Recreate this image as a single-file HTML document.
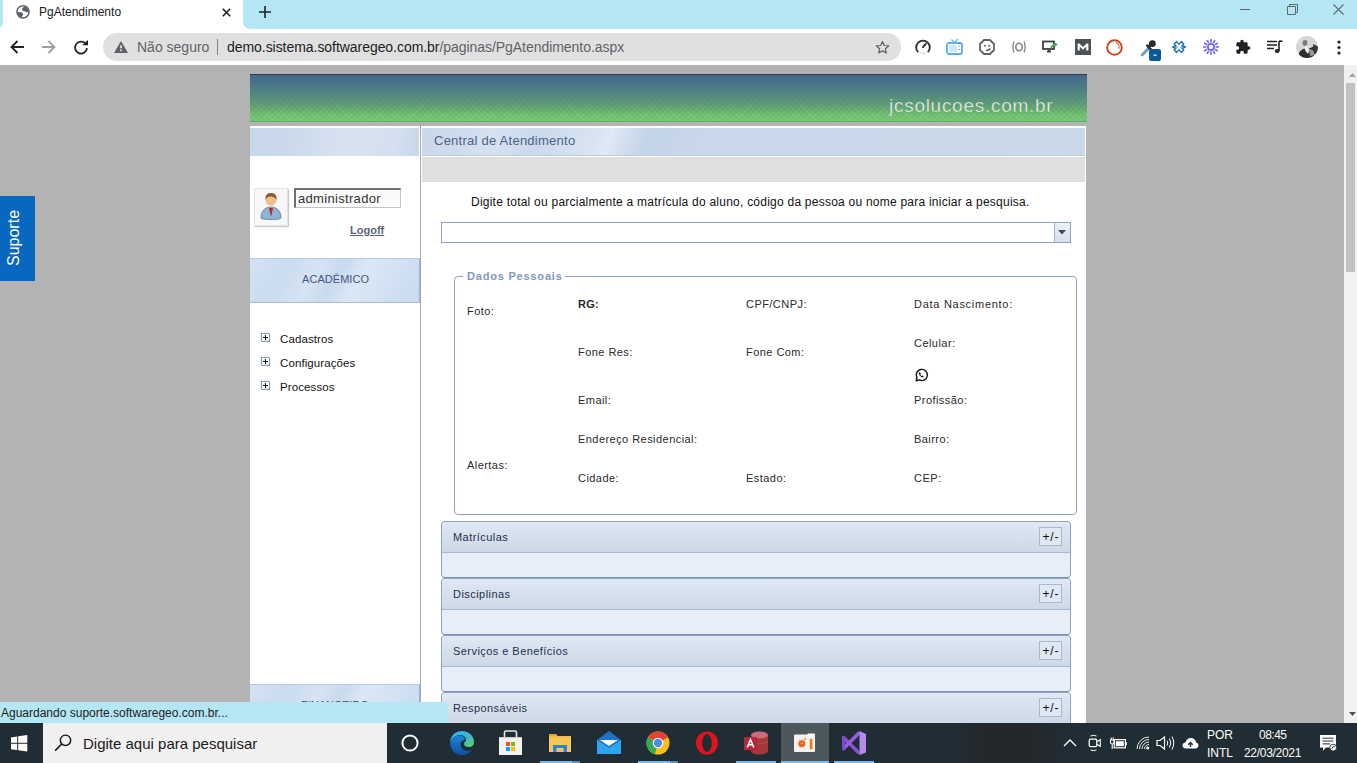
<!DOCTYPE html>
<html><head><meta charset="utf-8">
<style>
*{margin:0;padding:0;box-sizing:border-box}
html,body{width:1357px;height:763px;overflow:hidden;background:#b3b3b3;font-family:"Liberation Sans",sans-serif}
.a{position:absolute}
.t{position:absolute;white-space:nowrap;line-height:1}
svg{position:absolute;overflow:visible}
.lbl{position:absolute;white-space:nowrap;line-height:1;font-size:11px;letter-spacing:0.45px;color:#2a2a2a}
.hdrtex{background:linear-gradient(100deg,#c8d8eb 0%,#cbd9ec 25%,#d4e0ef 45%,#d8e3f0 60%,#d4e0ef 85%,#c6d6ec 100%)}
.hdrmain{background:linear-gradient(110deg,#c9d8ea 0px,#cfdcec 40px,#d6e2f0 70px,#cad9eb 110px,#d9e4f1 165px,#e0e9f4 180px,#c3d3e8 215px,#c8d7ea 260px,#cbd9ea 663px)}
.hdracad{background:linear-gradient(120deg,#d3e2f3 0%,#cbdcf0 22%,#d6e4f4 38%,#c9daef 50%,#dbe7f5 62%,#d2e1f3 80%,#c8daf0 100%)}
.pnl{position:absolute;left:441px;width:630px;height:57px;border:1px solid #8ea4c2;border-bottom-color:#7b93b5;border-radius:4px;background:#e8eef8;overflow:hidden}
.pnl .h{position:absolute;left:0;top:0;right:0;height:31px;background:linear-gradient(#dfe8f3,#cdd9e8);border-bottom:1px solid #a9bad0}
.pnl .h span{position:absolute;left:11px;top:10px;font-size:11px;letter-spacing:0.45px;line-height:1;color:#1f2f4d;white-space:nowrap}
.pnl .b{position:absolute;right:8px;top:5px;width:23px;height:19px;border:1px solid #a9b9cd;background:#dfe8f3;font-size:12px;line-height:19px;letter-spacing:0.9px;text-indent:0.9px;text-align:center;color:#111}
</style></head><body>
<!-- tab strip -->
<div class="a" style="left:0;top:0;width:1357px;height:65px;background:#fff"></div>
<div class="a" style="left:243px;top:0;width:1114px;height:29px;background:#b5e6f3;border-bottom-left-radius:7px"></div>
<div class="a" style="left:0;top:0;width:3px;height:27px;background:#b5e6f3;border-bottom-right-radius:3px 5px"></div>
<!-- tab content -->
<svg style="left:16px;top:5px" width="14" height="14" viewBox="0 0 14 14"><circle cx="7" cy="6.8" r="6.1" fill="#fff" stroke="#5f6368" stroke-width="1.5"/><path d="M5.8 4.6 Q6 2.4 8.6 1.6 L11.6 3 Q13 5 12.8 7 Q10.6 7.6 9.4 6.6 Q7 6.6 5.8 4.6Z" fill="#5f6368"/><path d="M1 7.2 Q3.6 6.6 5.8 7.6 Q7.4 8.4 7 10 Q6 10.6 5.6 12.6 L3 11.6 Q1 10 1 7.2Z" fill="#5f6368"/></svg>
<div class="t" style="left:39px;top:6px;font-size:12px;color:#202124">PgAtendimento</div>
<svg style="left:222px;top:8px" width="9" height="9"><path d="M0.8 0.8L8.2 8.2M8.2 0.8L0.8 8.2" stroke="#202124" stroke-width="1.6"/></svg>
<svg style="left:259px;top:6px" width="12" height="12"><path d="M6 0V12M0 6H12" stroke="#202124" stroke-width="1.6"/></svg>
<!-- window controls -->
<div class="a" style="left:1240px;top:9px;width:10px;height:1px;background:#5f6a6e"></div>
<svg style="left:1287px;top:4px" width="11" height="11"><path d="M0.5 2.5H8.5V10.5H0.5Z M2.5 2.5V0.5H10.5V8.5H8.5" fill="none" stroke="#5f6a6e" stroke-width="1"/></svg>
<svg style="left:1333px;top:4px" width="11" height="11"><path d="M0.5 0.5L10.5 10.5M10.5 0.5L0.5 10.5" stroke="#5f6a6e" stroke-width="1.1"/></svg>
<!-- nav -->
<svg style="left:10px;top:40px" width="14" height="14"><path d="M14 7H1.5M7.5 1L1.5 7L7.5 13" fill="none" stroke="#202124" stroke-width="1.8"/></svg>
<svg style="left:42px;top:40px" width="14" height="14"><path d="M0 7H12.5M6.5 1L12.5 7L6.5 13" fill="none" stroke="#9aa0a6" stroke-width="1.8"/></svg>
<svg style="left:74px;top:40px" width="14" height="14" viewBox="0 0 14 14"><path d="M12 4.2 A6 6 0 1 0 13 8.2" fill="none" stroke="#202124" stroke-width="1.8"/><path d="M8.2 5.2H14V0Z" fill="#202124"/></svg>
<!-- omnibox -->
<div class="a" style="left:103px;top:33px;width:798px;height:28px;background:#e0e0e0;border-radius:14px"></div>
<svg style="left:114px;top:40.5px" width="14" height="12" viewBox="0 0 14 12"><path d="M7 0L14 12H0Z" fill="#5f6368"/><path d="M6.1 4.2H7.9V7.2H6.1Z M6.1 8.4H7.9V10.2H6.1Z" fill="#e0e0e0"/></svg>
<div class="t" style="left:137px;top:40px;font-size:14px;color:#5f6368">Não seguro</div>
<div class="a" style="left:217px;top:39px;width:1px;height:16px;background:#80868b"></div>
<div class="t" style="left:227px;top:40px;font-size:14px;color:#202124;letter-spacing:-0.05px">demo.sistema.softwaregeo.com.br<span style="color:#5f6368">/paginas/PgAtendimento.aspx</span></div>
<svg style="left:875px;top:40px" width="15" height="15" viewBox="0 0 24 24"><path d="M12 2.5l2.9 6.3 6.9.7-5.2 4.6 1.5 6.8L12 17.4 5.9 20.9l1.5-6.8L2.2 9.5l6.9-.7z" fill="none" stroke="#5f6368" stroke-width="2" stroke-linejoin="round"/></svg>


<!-- extensions -->
<svg style="left:915px;top:39px" width="16" height="16" viewBox="0 0 16 16"><path d="M3.2 13.2 A6.8 6.8 0 0 0 12.8 13.2Z" fill="#e3e3e3"/><path d="M3.2 13.2 A6.8 6.8 0 1 1 12.8 13.2" fill="none" stroke="#2f3235" stroke-width="1.9"/><path d="M8 8.2 L10.8 4.8" stroke="#2f3235" stroke-width="2" stroke-linecap="round"/></svg>
<svg style="left:946px;top:38px" width="17" height="17" viewBox="0 0 17 17"><path d="M5.5 1.5L8.5 4.5L12 1" fill="none" stroke="#6bb6f2" stroke-width="1.2"/><rect x="1" y="5" width="15" height="11" rx="2" fill="none" stroke="#5aabf0" stroke-width="1.8"/><rect x="3" y="7" width="8" height="7" fill="#cfe6fb"/><path d="M13 8V9M13 11V12" stroke="#5aabf0" stroke-width="1.5"/></svg>
<svg style="left:979px;top:39px" width="16" height="16" viewBox="0 0 16 16"><path d="M5 1H11L15 5V11L11 15H5L1 11V5Z" fill="none" stroke="#5f6368" stroke-width="1.8" stroke-linejoin="round"/><circle cx="5.8" cy="6.8" r="1" fill="#5f6368"/><circle cx="10.2" cy="6.8" r="1" fill="#5f6368"/><path d="M7 11.5 Q10 11.5 11.5 9.5" fill="none" stroke="#5f6368" stroke-width="1.6"/></svg>
<svg style="left:1011px;top:40px" width="16" height="14" viewBox="0 0 16 14"><path d="M3 1.5 Q0.8 7 3 12.5 M13 1.5 Q15.2 7 13 12.5" fill="none" stroke="#80868b" stroke-width="1.3"/><ellipse cx="8" cy="7" rx="3.2" ry="3.8" fill="none" stroke="#80868b" stroke-width="1.6"/></svg>
<svg style="left:1042px;top:40px" width="17" height="14" viewBox="0 0 17 14"><rect x="1" y="1.5" width="11" height="7.5" fill="none" stroke="#3c4043" stroke-width="1.8"/><path d="M5 11.5H9 M7 9V11.5" stroke="#3c4043" stroke-width="1.8"/><path d="M9 8 Q10.5 4.5 14 4.5" fill="none" stroke="#4caf50" stroke-width="1.8"/><path d="M12.5 2L16 4.5L12.5 7Z" fill="#4caf50"/></svg>
<div class="a" style="left:1075px;top:39px;width:16px;height:16px;background:#4c5256"></div>
<svg style="left:1077px;top:43px" width="12" height="8" viewBox="0 0 12 8"><path d="M0.6 7.5V0.6H2.4L6 4L9.6 0.6H11.4V7.5H9.2V3.8L6 6.8L2.8 3.8V7.5Z" fill="#fff"/></svg>
<svg style="left:1106px;top:39px" width="17" height="17" viewBox="0 0 17 17"><circle cx="8.5" cy="8.5" r="7.3" fill="none" stroke="#c6461d" stroke-width="1.9"/><path d="M10 3.6 A5 5 0 0 1 12.8 9.8" fill="none" stroke="#c6461d" stroke-width="1.1"/></svg>
<svg style="left:1139px;top:37px" width="24" height="24" viewBox="0 0 24 24"><path d="M2.2 17.2 L9.2 10.2 L10.8 11.8 L3.8 18.8 L2.4 18.8 L2.2 17.6Z" fill="#5aa6e6" stroke="#8a9096" stroke-width="0.9"/><path d="M8.2 8.6 L12.4 12.8" stroke="#2a2a2a" stroke-width="2.4" stroke-linecap="round"/><circle cx="13.4" cy="6.6" r="3.4" fill="#2a2a2a"/><path d="M10.2 9.2 L12.5 6.8" stroke="#2a2a2a" stroke-width="3"/><rect x="10" y="12" width="12" height="12" rx="2" fill="#0f5a96"/><rect x="14.6" y="17.6" width="3" height="1.2" fill="#fff"/><rect x="16.6" y="17.6" width="1" height="1.2" fill="#e55"/></svg>
<svg style="left:1171px;top:39px" width="16" height="16" viewBox="0 0 16 16"><path d="M8 5.4 L5.6 2.6 L3.2 5 L4.8 6.6 L1.6 8 L4.8 9.4 L3.2 11 L5.6 13.4 L8 10.6 L10.4 13.4 L12.8 11 L11.2 9.4 L14.4 8 L11.2 6.6 L12.8 5 L10.4 2.6 Z" fill="none" stroke="#1f6fc6" stroke-width="1.4" stroke-linejoin="round"/><path d="M6.6 8H3.5M9.4 8H12.5" stroke="#1f6fc6" stroke-width="1.1"/></svg>
<svg style="left:1203px;top:39px" width="16" height="16" viewBox="0 0 16 16"><path d="M12.60 8.00L15.90 8.00M11.98 10.30L14.84 11.95M10.30 11.98L11.95 14.84M8.00 12.60L8.00 15.90M5.70 11.98L4.05 14.84M4.02 10.30L1.16 11.95M3.40 8.00L0.10 8.00M4.02 5.70L1.16 4.05M5.70 4.02L4.05 1.16M8.00 3.40L8.00 0.10M10.30 4.02L11.95 1.16M11.98 5.70L14.84 4.05" stroke="#6b63f5" stroke-width="1.6"/><circle cx="8" cy="8" r="3.1" fill="none" stroke="#6b63f5" stroke-width="1.7"/></svg>
<svg style="left:1235px;top:39px" width="16" height="16" viewBox="0 0 24 24"><path d="M20.5 11H19V7c0-1.1-.9-2-2-2h-4V3.5C13 2.12 11.88 1 10.5 1S8 2.12 8 3.5V5H4c-1.1 0-1.99.9-1.99 2v3.8H3.5c1.49 0 2.7 1.21 2.7 2.7s-1.21 2.7-2.7 2.7H2V20c0 1.1.9 2 2 2h3.8v-1.5c0-1.49 1.21-2.7 2.7-2.7 1.49 0 2.7 1.21 2.7 2.7V22H17c1.1 0 2-.9 2-2v-4h1.5c1.38 0 2.5-1.12 2.5-2.5S21.88 11 20.5 11z" fill="#202124"/></svg>
<svg style="left:1267px;top:40px" width="16" height="14" viewBox="0 0 16 14"><path d="M0 1.5H10M0 5H10M0 8.5H7" stroke="#202124" stroke-width="1.6"/><path d="M12 1V11" stroke="#202124" stroke-width="1.6"/><path d="M12 1.2H15.5" stroke="#202124" stroke-width="1.6"/><ellipse cx="10.2" cy="11" rx="2.4" ry="2.1" fill="#202124"/></svg>
<svg style="left:1296px;top:36px" width="22" height="22" viewBox="0 0 22 22"><defs><clipPath id="avc"><circle cx="11" cy="11" r="11"/></clipPath></defs><g clip-path="url(#avc)"><rect width="22" height="22" fill="#d5d7d8"/><path d="M2 22 L3 17 Q5 13 9 12.5 L13 12.5 Q17 11 19 9 L22 11 L22 22Z" fill="#2e2e30"/><path d="M17 8 L21 10 L21 17 L18 15Z" fill="#3a3a3c"/><ellipse cx="9" cy="7" rx="2.4" ry="3" fill="#7a7a7c"/><path d="M8 10.5 L11 9.5 L13.5 14 L12 18 L9.5 15Z" fill="#eeeeee"/><path d="M13 13 L17 14 L19 19 L14 20Z" fill="#9a9a9c"/></g></svg>
<svg style="left:1337px;top:40px" width="4" height="15"><circle cx="2" cy="2" r="1.6" fill="#202124"/><circle cx="2" cy="7.5" r="1.6" fill="#202124"/><circle cx="2" cy="13" r="1.6" fill="#202124"/></svg>

<!-- PAGE -->
<div class="a" style="left:0;top:65px;width:1357px;height:658px;background:#b3b3b3"></div>
<!-- banner -->
<div class="a" style="left:250px;top:74px;width:837px;height:48px;background:linear-gradient(#2f3c5c 0px,#2f3c5c 1px,#44688b 1px,#4a7688 10px,#4f8284 17px,#568d7a 24px,#5b9872 30px,#63aa6b 36px,#6dbd6c 41px,#72c372 47px,#62b064 47px)"></div>
<div class="a" style="left:250px;top:92px;width:837px;height:29px;opacity:0.28;-webkit-mask-image:linear-gradient(transparent,#000 70%);background:repeating-linear-gradient(45deg,rgba(255,255,255,0.25) 0 1px,transparent 1px 4px),repeating-linear-gradient(-45deg,rgba(255,255,255,0.25) 0 1px,transparent 1px 4px)"></div>
<div class="t" style="left:889px;top:96px;font-size:19px;color:#eef2ee;letter-spacing:0.72px;-webkit-text-stroke:0.45px rgba(90,150,118,0.75)">jcsolucoes.com.br</div>
<!-- container -->
<div class="a" style="left:250px;top:126px;width:836px;height:597px;background:#fff"></div>
<div class="a" style="left:420px;top:126px;width:1px;height:597px;background:#a8a8a8"></div>
<!-- left header -->
<div class="a hdrtex" style="left:250px;top:128px;width:169px;height:28px"></div>
<!-- avatar -->
<div class="a" style="left:254px;top:188px;width:34px;height:38px;background:#f7f7f7;border:1px solid #e2e2e2;box-shadow:1px 1px 1px #ccc"></div>
<svg style="left:254px;top:188px" width="34" height="38" viewBox="0 0 34 38">
 <path d="M7 30 C7 22 12 19 17 19 C22 19 27 22 27 30 C27 32 7 32 7 30Z" fill="#8db4d4" stroke="#5c7a94" stroke-width="0.8"/>
 <path d="M15 20 L17 29 L19 20Z" fill="#b8262a"/>
 <circle cx="17" cy="12" r="5.5" fill="#f3c08a"/>
 <path d="M11.5 12 C11 6 14 5 17 5 C21 5 23 7 22.5 12 C21 9 19 8.5 17 8.5 C14 8.5 12.5 9.5 11.5 12Z" fill="#8a5a36"/>
</svg>
<!-- input -->
<div class="a" style="left:294px;top:188px;width:107px;height:20px;background:#fafafa;border-top:2px solid #6e6e76;border-left:2px solid #6e6e76;border-right:1px solid #c4c4c4;border-bottom:1px solid #c4c4c4"></div>
<div class="t" style="left:298px;top:192px;font-size:13px;color:#333;letter-spacing:0.32px">administrador</div>
<div class="t" style="left:350px;top:225px;font-size:11px;font-weight:bold;color:#5b6378;text-decoration:underline">Logoff</div>
<!-- academico -->
<div class="a hdracad" style="left:250px;top:258px;width:170px;height:45px;border-top:1px solid #b9c9dd;border-bottom:1px solid #a8bbd3;border-right:1px solid #9cb4d6"></div>
<div class="t" style="left:302px;top:274px;font-size:11px;color:#46587a;letter-spacing:0.05px">ACADÊMICO</div>
<!-- tree -->
<div class="a" style="left:261px;top:333px;width:9px;height:9px;border:1px solid #7ea2cf;background:linear-gradient(#fff 55%,#e6e2dc)"></div>
<div class="a" style="left:263px;top:337px;width:5px;height:1px;background:#111"></div>
<div class="a" style="left:265px;top:335px;width:1px;height:5px;background:#111"></div>
<div class="a" style="left:261px;top:357px;width:9px;height:9px;border:1px solid #7ea2cf;background:linear-gradient(#fff 55%,#e6e2dc)"></div>
<div class="a" style="left:263px;top:361px;width:5px;height:1px;background:#111"></div>
<div class="a" style="left:265px;top:359px;width:1px;height:5px;background:#111"></div>
<div class="a" style="left:261px;top:381px;width:9px;height:9px;border:1px solid #7ea2cf;background:linear-gradient(#fff 55%,#e6e2dc)"></div>
<div class="a" style="left:263px;top:385px;width:5px;height:1px;background:#111"></div>
<div class="a" style="left:265px;top:383px;width:1px;height:5px;background:#111"></div>
<div class="t" style="left:280px;top:334px;font-size:11.5px;color:#111;letter-spacing:0.1px">Cadastros</div>
<div class="t" style="left:280px;top:358px;font-size:11.5px;color:#111;letter-spacing:0.1px">Configurações</div>
<div class="t" style="left:280px;top:382px;font-size:11.5px;color:#111;letter-spacing:0.1px">Processos</div>
<!-- financeiro header bottom -->
<div class="a hdracad" style="left:250px;top:684px;width:170px;height:40px;border-top:1px solid #b9c9dd;border-right:1px solid #9cb4d6"></div>

<div class="t" style="left:301px;top:700px;font-size:11px;color:#3c4a66">FINANCEIRO</div>
<!-- main header -->
<div class="a hdrmain" style="left:422px;top:128px;width:663px;height:28px;border-bottom:1px solid #bccbdd"></div>
<div class="t" style="left:434px;top:134px;font-size:13px;color:#4a6388;letter-spacing:0.25px">Central de Atendimento</div>
<div class="a" style="left:422px;top:157px;width:663px;height:25px;background:#dfdfdf"></div>
<div class="t" style="left:471px;top:196px;font-size:12px;color:#111;letter-spacing:0.235px">Digite total ou parcialmente a matrícula do aluno, código da pessoa ou nome para iniciar a pesquisa.</div>
<!-- dropdown -->
<div class="a" style="left:441px;top:222px;width:630px;height:21px;border:1px solid #8da2bf;background:#fff"></div>
<div class="a" style="left:1054px;top:223px;width:16px;height:19px;border-left:1px solid #9fb2cb;background:linear-gradient(#eef2f8,#d6e0ec)"></div>
<svg style="left:1058px;top:230px" width="8" height="5"><path d="M0 0H8L4 4.5Z" fill="#3e4a5e"/></svg>

<!-- fieldset -->
<div class="a" style="left:454px;top:276px;width:623px;height:239px;border:1px solid #8da2bf;border-radius:4px"></div>
<div class="a" style="left:463px;top:270px;width:102px;height:12px;background:#fff"></div>
<div class="t" style="left:467px;top:271px;font-size:11px;font-weight:bold;color:#8099bd;letter-spacing:0.8px">Dados Pessoais</div>
<div class="lbl" style="left:467px;top:306px">Foto:</div>
<div class="lbl" style="left:467px;top:460px">Alertas:</div>
<div class="lbl" style="left:578px;top:299px;font-weight:bold;letter-spacing:0.2px">RG:</div>
<div class="lbl" style="left:578px;top:347px">Fone Res:</div>
<div class="lbl" style="left:578px;top:395px">Email:</div>
<div class="lbl" style="left:578px;top:434px">Endereço Residencial:</div>
<div class="lbl" style="left:578px;top:473px">Cidade:</div>
<div class="lbl" style="left:746px;top:299px">CPF/CNPJ:</div>
<div class="lbl" style="left:746px;top:347px">Fone Com:</div>
<div class="lbl" style="left:746px;top:473px">Estado:</div>
<div class="lbl" style="left:914px;top:299px;letter-spacing:0.72px">Data Nascimento:</div>
<div class="lbl" style="left:914px;top:338px">Celular:</div>
<svg style="left:914px;top:368px" width="15" height="14" viewBox="0 0 15 14">
 <path d="M2.2 12.8 L3 9.8 A5.6 5.6 0 1 1 5.2 11.9 Z" fill="none" stroke="#111" stroke-width="1.4" stroke-linejoin="round"/>
 <path d="M5.2 4.2 C4.6 4.8 4.6 5.8 5.6 7.2 C6.6 8.6 8 9.4 9 9.2 L9.8 8.5 L8.6 7.6 L7.9 8.1 C7.2 7.8 6.6 7.1 6.3 6.4 L6.8 5.7 L6 4.3Z" fill="#111"/>
</svg>
<div class="lbl" style="left:914px;top:395px">Profissão:</div>
<div class="lbl" style="left:914px;top:434px">Bairro:</div>
<div class="lbl" style="left:914px;top:473px">CEP:</div>

<!-- panels -->
<div class="pnl" style="top:521px"><div class="h"><span>Matrículas</span><div class="b">+/-</div></div></div>
<div class="pnl" style="top:578px"><div class="h"><span>Disciplinas</span><div class="b">+/-</div></div></div>
<div class="pnl" style="top:635px"><div class="h"><span>Serviços e Benefícios</span><div class="b">+/-</div></div></div>
<div class="pnl" style="top:692px"><div class="h"><span>Responsáveis</span><div class="b">+/-</div></div></div>

<!-- scrollbar -->
<div class="a" style="left:1344px;top:65px;width:13px;height:658px;background:#f1f1f1"></div>
<div class="a" style="left:1346px;top:83px;width:9px;height:189px;background:#c1c1c1"></div>
<svg style="left:1349px;top:73px" width="7" height="4"><path d="M0 4L3.5 0L7 4Z" fill="#a3a3a3"/></svg>
<svg style="left:1349px;top:712px" width="7" height="4"><path d="M0 0L3.5 4L7 0Z" fill="#505050"/></svg>

<!-- suporte -->
<div class="a" style="left:0;top:196px;width:35px;height:85px;background:#0868c0"></div>
<div class="t" style="left:6px;top:266px;font-size:16px;color:#fff;transform:rotate(-90deg);transform-origin:0 0">Suporte</div>

<!-- status bar -->
<div class="a" style="left:0;top:702px;width:448px;height:21px;background:#b5e6f3;border-top-right-radius:3px"></div>
<div class="t" style="left:1px;top:707px;font-size:12px;color:#202124">Aguardando suporte.softwaregeo.com.br...</div>

<!-- taskbar -->
<div class="a" style="left:0;top:723px;width:1357px;height:40px;background:#202d34"></div>
<svg style="left:11px;top:735px" width="17" height="17" viewBox="0 0 17 17"><path d="M0 2.4L6.2 1.5V7.8H0Z M7.2 1.35L16.3 0V7.8H7.2Z M0 8.8H6.2V15.1L0 14.2Z M7.2 8.8H16.3V16.5L7.2 15.2Z" fill="#fff"/></svg>
<div class="a" style="left:43px;top:723px;width:344px;height:40px;background:#f0f0f0"></div>
<svg style="left:54px;top:734px" width="18" height="18" viewBox="0 0 18 18"><circle cx="11.5" cy="6.3" r="5.2" fill="none" stroke="#111" stroke-width="1.4"/><path d="M7.8 10L1.2 16.6" stroke="#111" stroke-width="1.5"/></svg>
<div class="t" style="left:83px;top:736px;font-size:15px;color:#1a1a1a">Digite aqui para pesquisar</div>
<svg style="left:400px;top:733px" width="20" height="20"><circle cx="10" cy="10" r="7.6" fill="none" stroke="#fff" stroke-width="2"/></svg>
<div class="a" style="left:955px;top:723px;width:110px;height:40px;background:linear-gradient(90deg,rgba(35,39,43,0) 0,#23282c 30px,#23282c 80px,rgba(35,39,43,0) 110px)"></div>
<!-- edge -->
<svg style="left:449px;top:730px" width="26" height="26" viewBox="0 0 26 26"><defs><linearGradient id="eg1" x1="0" y1="0" x2="1" y2="1"><stop offset="0" stop-color="#35c1f1"/><stop offset="0.5" stop-color="#3bb0d8"/><stop offset="1" stop-color="#66d35b"/></linearGradient><linearGradient id="eg2" x1="0" y1="0" x2="0" y2="1"><stop offset="0" stop-color="#1a86d6"/><stop offset="1" stop-color="#0f4fa0"/></linearGradient></defs>
<path d="M13 1 C20 1 25 6 25 12 C25 15 23 17 20 17 C17 17 15 16 15 14 C15 12 17 11.5 17 10 C17 7 14 5 11 5 C6 5 2 9 1.3 13 C1 6 6 1 13 1Z" fill="url(#eg1)"/>
<path d="M1.3 13 C2 8.5 6 5.5 10.5 5.5 C13.5 5.5 16 7.5 16 10 C14 10 11.5 11.5 11.5 14.5 C11.5 18.5 15 21 19.5 21 C21 21 22 20.5 22.5 20.3 C20.5 23.3 17 25 13 25 C6 25 1.3 19.5 1.3 13Z" fill="url(#eg2)"/></svg>
<!-- store -->
<svg style="left:498px;top:730px" width="25" height="26" viewBox="0 0 25 26"><path d="M6.5 7V2.5C6.5 1.5 7.2 1 8 1H17C17.8 1 18.5 1.5 18.5 2.5V7" fill="none" stroke="#e8e8e8" stroke-width="1.6"/><rect x="1" y="7" width="23" height="18" fill="#f2f2f2"/><rect x="1" y="7" width="23" height="1.2" fill="#cfcfcf"/><rect x="8" y="12" width="4" height="4" fill="#f25022"/><rect x="13" y="12" width="4" height="4" fill="#7fba00"/><rect x="8" y="17" width="4" height="4" fill="#00a4ef"/><rect x="13" y="17" width="4" height="4" fill="#ffb900"/></svg>
<!-- explorer -->
<svg style="left:548px;top:733px" width="24" height="20" viewBox="0 0 24 20"><path d="M1 1H8L9.5 3H23V19H1Z" fill="#f7c75a"/><rect x="1" y="1" width="7" height="2" fill="#e6a72a"/><rect x="1" y="3.5" width="22" height="1" fill="#e9b445"/><path d="M5 19V12H19V19H15.5V15H8.5V19Z" fill="#2c86d6"/></svg>
<!-- mail -->
<svg style="left:596px;top:730px" width="26" height="25" viewBox="0 0 26 25"><path d="M1 10L13 1L25 10V24H1Z" fill="#1a73c9"/><path d="M4 10H22L13 16Z" fill="#fff"/><path d="M1 10L13 18L25 10V24H1Z" fill="#2ea5ec"/></svg>
<!-- chrome -->
<svg style="left:646px;top:731px" width="24" height="24" viewBox="0 0 24 24"><circle cx="12" cy="12" r="11.5" fill="#fbc117"/><path d="M12 12L2 6.2A11.5 11.5 0 0 1 22 6.2Z" fill="#e34234"/><path d="M12 12L2 6.2A11.5 11.5 0 0 0 9 23.1Z" fill="#34a853"/><circle cx="12" cy="12" r="5.3" fill="#fff"/><circle cx="12" cy="12" r="4.2" fill="#4a8af4"/></svg>
<!-- opera -->
<svg style="left:695px;top:731px" width="24" height="24" viewBox="0 0 24 24"><ellipse cx="12" cy="12" rx="11" ry="11.5" fill="#e0141e"/><ellipse cx="12" cy="12" rx="4.8" ry="9" fill="#202d34"/></svg>
<!-- access -->
<svg style="left:744px;top:731px" width="25" height="24" viewBox="0 0 25 24"><path d="M7 4V20C7 22 10.5 23.5 15.5 23.5C20.5 23.5 24 22 24 20V4Z" fill="#a4373a"/><ellipse cx="15.5" cy="4" rx="8.5" ry="3.5" fill="#d16b7a"/><path d="M7 9C7 11 10.5 12.5 15.5 12.5C20.5 12.5 24 11 24 9" fill="none" stroke="#c24a57" stroke-width="1"/><rect x="0" y="6" width="13" height="13" fill="#b7243c"/><path d="M3.2 16.5L6.5 8.5L9.8 16.5M4.4 13.8H8.6" fill="none" stroke="#fff" stroke-width="1.6"/></svg>
<!-- active app -->
<div class="a" style="left:781px;top:723px;width:48px;height:40px;background:#4d575c"></div>
<svg style="left:793px;top:733px" width="23" height="20" viewBox="0 0 23 20"><rect x="1" y="1.5" width="21" height="17.5" rx="1" fill="#f4f1ee"/><rect x="14.5" y="0.5" width="7.5" height="3" rx="0.8" fill="#fbfbfb"/><circle cx="8.8" cy="10.7" r="5" fill="#e9e4df"/><circle cx="8.8" cy="10.7" r="3.4" fill="#e8651f"/><path d="M7.5 10.4Q8.8 9.4 10 10.8" fill="none" stroke="#f6c9a0" stroke-width="0.8"/><circle cx="12.2" cy="5.9" r="0.9" fill="#e8651f"/><rect x="16.8" y="5.9" width="2.6" height="10.2" fill="#e07b22"/></svg>
<!-- vs -->
<svg style="left:838px;top:727px" width="32" height="32" viewBox="0 0 32 32"><path d="M5.5 10.5L21.5 26.5" stroke="#8a52d4" stroke-width="3.6"/><path d="M5.5 21.5L21.5 5.5" stroke="#9460de" stroke-width="3.6"/><rect x="4" y="9" width="3.2" height="14.5" rx="1" fill="#8048c8"/><path d="M21.5 4L28 7V25.5L21.5 28Z" fill="#b48af0"/></svg>
<!-- underlines -->
<div class="a" style="left:540px;top:761px;width:32px;height:2px;background:#76b9ed"></div><div class="a" style="left:572px;top:761px;width:8px;height:2px;background:#5a8db8"></div>
<div class="a" style="left:638px;top:761px;width:32px;height:2px;background:#76b9ed"></div><div class="a" style="left:670px;top:761px;width:8px;height:2px;background:#5a8db8"></div>
<div class="a" style="left:736px;top:761px;width:40px;height:2px;background:#76b9ed"></div>
<div class="a" style="left:781px;top:761px;width:48px;height:2px;background:#76b9ed"></div>
<div class="a" style="left:834px;top:761px;width:40px;height:2px;background:#76b9ed"></div>
<!-- tray -->
<svg style="left:1063px;top:738px" width="14" height="9"><path d="M1 8L7 2L13 8" fill="none" stroke="#fff" stroke-width="1.3"/></svg>
<svg style="left:1088px;top:734px" width="14" height="18" viewBox="0 0 14 18"><path d="M2.5 2Q5.5 0.6 8.5 2M2.5 16Q5.5 17.4 8.5 16" fill="none" stroke="#fff" stroke-width="1"/><rect x="1.2" y="5.2" width="7.6" height="7.4" rx="1.3" fill="none" stroke="#fff" stroke-width="1.2"/><path d="M8.8 7.8L12.3 5.8V12.2L8.8 10.2" fill="none" stroke="#fff" stroke-width="1.1"/></svg>
<svg style="left:1110px;top:737px" width="17" height="13" viewBox="0 0 17 13"><path d="M1.2 0.5V3M3.2 0.5V3M0.5 3H4V5.5Q4 7 2.2 7Q0.5 7 0.5 5.5Z M2.2 7V12" fill="none" stroke="#fff" stroke-width="1.1"/><rect x="4.2" y="2.6" width="11.2" height="8.2" fill="none" stroke="#fff" stroke-width="1.2"/><rect x="5.8" y="4.2" width="8" height="5" fill="#fff"/><rect x="15.4" y="5" width="1.4" height="3.4" fill="#fff"/></svg>
<svg style="left:1136px;top:736px" width="15" height="14" viewBox="0 0 15 14"><path d="M1 13A12 12 0 0 1 13 1M3.5 13A9.5 9.5 0 0 1 13 3.5M6 13A7 7 0 0 1 13 6M8.5 13A4.5 4.5 0 0 1 13 8.5" fill="none" stroke="#fff" stroke-width="0.9"/><circle cx="11.8" cy="12" r="1.6" fill="#fff"/></svg>
<svg style="left:1156px;top:735px" width="19" height="16" viewBox="0 0 19 16"><path d="M1 5.5H4L8.5 2V14L4 10.5H1Z" fill="none" stroke="#fff" stroke-width="1.2"/><path d="M11 5.5Q12.5 8 11 10.5M13.5 3.5Q16 8 13.5 12.5M16 1.5Q19.5 8 16 14.5" fill="none" stroke="#fff" stroke-width="1"/></svg>
<svg style="left:1182px;top:737px" width="17" height="12" viewBox="0 0 17 12"><path d="M4 11.5C1.5 11.5 0.5 10 0.5 8.5C0.5 6.5 2 5.5 3.5 5.5C4 3 6 1 9 1C12 1 14 3.5 14 5.5C15.5 5.5 16.5 7 16.5 8.5C16.5 10 15.5 11.5 13.5 11.5Z" fill="#fff"/><path d="M8.5 10V6M6.3 7.8L8.5 5.5L10.7 7.8" fill="none" stroke="#202d34" stroke-width="1.4"/></svg>
<div class="t" style="left:1207px;top:729px;font-size:12px;color:#fff">POR</div>
<div class="t" style="left:1207px;top:747px;font-size:12px;color:#fff">INTL</div>
<div class="t" style="left:1259px;top:728.5px;font-size:12px;color:#fff;letter-spacing:-0.5px">08:45</div>
<div class="t" style="left:1244px;top:746.5px;font-size:12px;color:#fff;letter-spacing:-0.3px">22/03/2021</div>
<svg style="left:1319px;top:734px" width="18" height="18" viewBox="0 0 18 18"><path d="M1 1H17V13.5H7L4 16.8V13.5H1Z" fill="#fff"/><path d="M3.5 4.2H14.5M3.5 7H14.5M3.5 9.9H11" stroke="#202d34" stroke-width="1"/><circle cx="14.2" cy="13.6" r="3.4" fill="#fff" stroke="#202d34" stroke-width="0.9"/><path d="M12.8 14.8Q13.5 12.2 15.8 12.2" fill="none" stroke="#202d34" stroke-width="1"/></svg>
</body></html>
